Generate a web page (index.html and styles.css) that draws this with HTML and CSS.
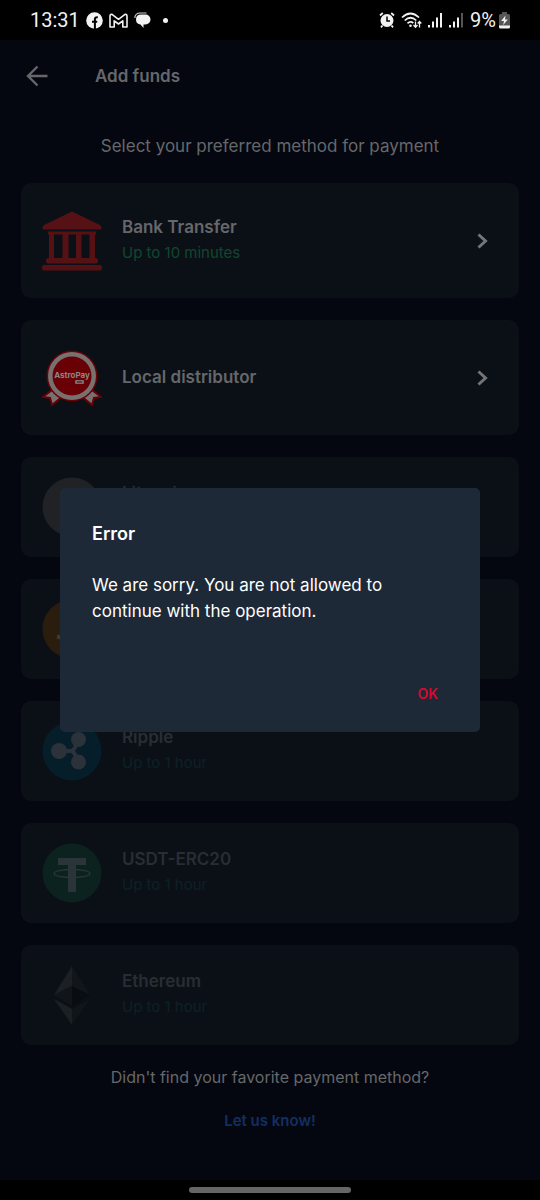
FILE: index.html
```html
<!DOCTYPE html>
<html lang="en">
<head>
    <meta charset="UTF-8">
    <meta name="viewport" content="width=device-width, initial-scale=1.0">
    <title>Add funds</title>
    <link rel="stylesheet" href="styles.css">
</head>
<body>
    <div class="screen">
        <!-- Phone status bar -->
        <div class="status-bar">
            <div class="status-left">
                <span class="clock">13:31</span>
                <svg width="17" height="17" viewBox="0 0 17 17">
                    <circle cx="8.500" cy="8.500" r="8.300" fill="#f2f2f2"/>
                    <path d="M8.900 17v-6.300M6 9.700h5.200M8.900 12V7.300Q8.900 4.900 11.800 5.200" fill="none" stroke="#000" stroke-width="2"/>
                </svg>
                <svg width="19" height="15" viewBox="0 0 19 15">
                    <path d="M1 3.200Q1 1 3 1.400L9.500 6.300 16 1.400Q18 1 18 3.200V14H13.800V7.800L9.500 11 5.200 7.800V14H1Z" fill="none" stroke="#f2f2f2" stroke-width="1.600" stroke-linejoin="round"/>
                </svg>
                <svg width="17" height="17" viewBox="0 0 17 17">
                    <path d="M.8 6Q1 1 6.500 1h6" fill="none" stroke="#cfcfcf" stroke-width="1.200"/>
                    <path d="M7 2.500h4.500A5 5 0 0 1 11.500 12.500H9.500V16L6.500 12.500Q2 12 2 7.500 2 2.500 7 2.500Z" fill="#f2f2f2"/>
                </svg>
                <span class="dot"></span>
            </div>
            <div class="status-right">
                <svg width="16" height="16" viewBox="0 0 16 16">
                    <circle cx="8" cy="8.500" r="6.500" fill="#f2f2f2"/>
                    <path d="M1 3.500 3.800 1M15 3.500 12.200 1M3.500 13.500 2 15.300M12.500 13.500 14 15.300" stroke="#f2f2f2" stroke-width="1.800"/>
                    <path d="M8 4.500V9h3" fill="none" stroke="#000" stroke-width="1.500"/>
                </svg>
                <svg width="21" height="17" viewBox="0 0 21 17">
                    <g fill="none" stroke="#f2f2f2" stroke-width="1.700">
                        <path d="M1 5.500Q9.500-2.500 18 5.500M3.700 8.500Q9.500 3 15.300 8.500M6.500 11.300Q9.500 8.500 12.300 11"/>
                        <path d="M14.500 9.500v5.500M12.500 13l2 2.200 2-2.200M18.500 15.500V9.500M16.700 11.500l1.800-2 1.800 2" stroke-width="1.300"/>
                    </g>
                    <circle cx="9.500" cy="13.800" r="1.300" fill="#f2f2f2"/>
                </svg>
                <svg width="15" height="16" viewBox="0 0 15 16" fill="#f2f2f2">
                    <path d="M0 13h2v2.500H0zM4 9.500h2v6H4zM8 5.500h2v10H8zM12 1h2v14.500h-2z"/>
                </svg>
                <svg width="15" height="16" viewBox="0 0 15 16" fill="#f2f2f2">
                    <path d="M0 13h2v2.500H0zM4 9.500h2v6H4zM8 5.500h2v10H8z"/>
                    <path d="M12 1h2v14.500h-2z" fill="#555"/>
                </svg>
                <span class="battery">
                    9%
                    <svg width="11" height="17" viewBox="0 0 11 17">
                        <path d="M3 0h5v2h1.500Q11 2 11 3.500V14H0V3.500Q0 2 1.500 2H3z" fill="#555"/>
                        <path d="M0 13.500h11V15q0 1.500-1.500 1.500h-8Q0 16.500 0 15z" fill="#f2f2f2"/>
                        <path d="M6.500 3.500 2.200 9H5l-.8 4L8.800 7.500H6z" fill="#f2f2f2"/>
                    </svg>
                </span>
            </div>
        </div>

        <header class="app-bar">
            <button class="back" type="button" aria-label="Back">
                <svg width="22" height="22" viewBox="0 0 22 22" fill="none" stroke="#66676a" stroke-width="2.400">
                    <path d="M21.500 11H2.500M11.500 1.500 2 11l9.500 9.500"/>
                </svg>
            </button>
            <h1 class="title">Add funds</h1>
        </header>

        <main class="content">
            <p class="intro">Select your preferred method for payment</p>

            <div class="methods">
                <button class="card card-tall" type="button">
                    <svg class="logo" viewBox="0 0 60 60" fill="#561114">
                        <path d="M30 .5 57 13.500q3 1.500 2.500 4-.5 1-2.500 1H3q-2 0-2.500-1Q0 15 3 13.500Z"/>
                        <path d="M6 20.500h48v3H6z"/>
                        <path d="M7 22h5v27H7zM20.500 22h6v27h-6zM34 22h5.500v27H34zM47.500 22h5.500v27h-5.500z"/>
                        <rect x="4" y="47" width="52" height="5.500" rx="2.500"/>
                        <rect x="0" y="54" width="60" height="5.500" rx="2.500"/>
                    </svg>
                    <span class="info">
                        <span class="name">Bank Transfer</span>
                        <span class="time">Up to 10 minutes</span>
                    </span>
                    <svg class="chevron" width="11" height="16" viewBox="0 0 11 16"><path d="M1.500 1.500 8.500 8l-7 6.500"/></svg>
                </button>

                <button class="card card-tall" type="button">
                    <svg class="logo" viewBox="0 0 60 60">
                        <path d="M10 42 1 49l7 1 2 7 11-9zM50 42l9 7-7 1-2 7-11-9z" fill="#777170" stroke="#680006" stroke-width="2"/>
                        <circle cx="30" cy="28" r="25.500" fill="#680006"/>
                        <circle cx="30" cy="28" r="24" fill="#777170"/>
                        <circle cx="30" cy="28" r="19.500" fill="#680006"/>
                        <text x="30" y="30" class="astro" text-anchor="middle">AstroPay</text>
                        <rect x="33" y="32" width="9" height="4" rx="1" fill="#777170"/>
                        <path d="M35 34h5" stroke="#680006"/>
                    </svg>
                    <span class="info">
                        <span class="name">Local distributor</span>
                    </span>
                    <svg class="chevron" width="11" height="16" viewBox="0 0 11 16"><path d="M1.500 1.500 8.500 8l-7 6.500"/></svg>
                </button>

                <button class="card disabled" type="button" disabled>
                    <svg class="logo" viewBox="0 0 60 60">
                        <circle cx="30" cy="30" r="29.500" fill="#202225"/>
                        <path d="M32 12 26 39h16M20 32l18-7" fill="none" stroke="#34363a" stroke-width="5"/>
                    </svg>
                    <span class="info">
                        <span class="name">Litecoin</span>
                        <span class="time">Up to 1 hour</span>
                    </span>
                </button>

                <button class="card disabled" type="button" disabled>
                    <svg class="logo" viewBox="0 0 60 60">
                        <circle cx="30" cy="30" r="29.500" fill="#2b1d0e"/>
                        <path d="M15 37.500l7 1.700 5-21-5-1.300M27 18q14 1 11 7-2 4-12 2 14 3 11 9-3 5-14 2" fill="none" stroke="#413a34" stroke-width="4"/>
                    </svg>
                    <span class="info">
                        <span class="name">Bitcoin</span>
                        <span class="time">Up to 1 hour</span>
                    </span>
                </button>

                <button class="card disabled" type="button" disabled>
                    <svg class="logo" viewBox="0 0 60 60">
                        <circle cx="30" cy="30" r="29.500" fill="#061d2a"/>
                        <g fill="#2b323a">
                            <circle cx="17" cy="30" r="8"/>
                            <circle cx="36.500" cy="18.500" r="7.500"/>
                            <circle cx="36.500" cy="41" r="7.500"/>
                        </g>
                        <path d="M22 30h7q4-1 5-7M29 30q4 1 5 7" fill="none" stroke="#2b323a" stroke-width="4"/>
                    </svg>
                    <span class="info">
                        <span class="name">Ripple</span>
                        <span class="time">Up to 1 hour</span>
                    </span>
                </button>

                <button class="card disabled" type="button" disabled>
                    <svg class="logo" viewBox="0 0 60 60">
                        <circle cx="30" cy="30" r="29.500" fill="#0b221e"/>
                        <path d="M16 15h28v7H34v27h-8V22H16z" fill="#2a3539"/>
                        <ellipse cx="30" cy="30.500" rx="18" ry="4" fill="none" stroke="#2a3539" stroke-width="1.300"/>
                    </svg>
                    <span class="info">
                        <span class="name">USDT-ERC20</span>
                        <span class="time">Up to 1 hour</span>
                    </span>
                </button>

                <button class="card disabled" type="button" disabled>
                    <svg class="logo" viewBox="0 0 60 60">
                        <path d="M30 1v20L12 30z" fill="#1c2025"/>
                        <path d="M30 1v20l18 9z" fill="#11161b"/>
                        <path d="M30 21v20L12 30z" fill="#11151a"/>
                        <path d="M30 21v20l18-11z" fill="#090c10"/>
                        <path d="M12 34l18 10v16z" fill="#1c2025"/>
                        <path d="M48 34 30 44v16z" fill="#10151a"/>
                    </svg>
                    <span class="info">
                        <span class="name">Ethereum</span>
                        <span class="time">Up to 1 hour</span>
                    </span>
                </button>
            </div>

            <p class="question">Didn't find your favorite payment method?</p>
            <a class="contact" href="#">Let us know!</a>
        </main>

        <div class="nav-bar"><span class="handle"></span></div>
    </div>

    <!-- Error dialog -->
    <div class="overlay">
        <div class="dialog" role="alertdialog" aria-labelledby="dialog-title" aria-describedby="dialog-text">
            <h2 class="dialog-title" id="dialog-title">Error</h2>
            <p class="dialog-text" id="dialog-text">We are sorry. You are not allowed to continue with the operation.</p>
            <button class="ok" type="button">OK</button>
        </div>
    </div>
</body>
</html>
```
FILE: styles.css
```css
* {
    box-sizing: border-box;
}

body {
    margin: 0;
    background: #04070f;
    color: #66676a;
    font-family: Inter, "Open Sans", sans-serif;
    font-size: 16px;
}

h1, h2, p {
    margin: 0;
}

button {
    border: 0;
    padding: 0;
    background: none;
    color: inherit;
    font: inherit;
    text-align: left;
}

.screen {
    display: flex;
    flex-direction: column;
    min-height: 100vh;
}

/* Status bar */
.status-bar {
    display: flex;
    justify-content: space-between;
    align-items: center;
    height: 40px;
    padding: 0 30px;
    background: #000;
    color: #f2f2f2;
    font-family: Roboto, sans-serif;
    font-size: 20px;
}

.status-left {
    display: flex;
    align-items: center;
    gap: 6px;
}

.status-right {
    display: flex;
    align-items: center;
    gap: 6px;
}

.battery {
    display: flex;
    align-items: center;
    gap: 3px;
}

.dot {
    width: 5px;
    height: 5px;
    margin-left: 6px;
    border-radius: 50%;
    background: #f2f2f2;
}

/* App bar */
.app-bar {
    display: flex;
    align-items: center;
    gap: 47px;
    height: 72px;
    padding: 0 26px;
}

.back {
    display: flex;
}

.title {
    font-size: 17px;
    font-weight: 600;
}

/* Payment methods */
.content {
    display: flex;
    flex-direction: column;
    align-items: center;
    padding: 20px 21px;
}

.intro {
    font-size: 17px;
    line-height: 28px;
}

.methods {
    display: flex;
    flex-direction: column;
    gap: 22px;
    width: 100%;
    margin: 23px 0 20px;
}

.card {
    display: flex;
    align-items: center;
    gap: 20px;
    height: 100px;
    padding: 0 31px 0 21px;
    border-radius: 10px;
    background: #0b1017;
}

.card-tall {
    height: 115px;
}

.logo {
    flex: none;
    width: 60px;
    height: 60px;
}

.astro {
    fill: #8f8583;
    font-size: 8px;
    font-weight: 700;
}

.info {
    display: flex;
    flex: 1;
    flex-direction: column;
    padding-bottom: 2px;
    line-height: 26px;
}

.name {
    font-size: 17px;
    font-weight: 600;
}

.time {
    color: #11472f;
    font-size: 15px;
}

.disabled .name {
    color: #292d33;
}

.disabled .time {
    color: #0d2124;
}

.chevron {
    fill: none;
    stroke: #747577;
    stroke-width: 3;
}

.question {
    font-size: 16px;
    line-height: 24px;
}

.contact {
    margin-top: 20px;
    color: #122f63;
    font-size: 15px;
    font-weight: 600;
    line-height: 24px;
    text-decoration: none;
}

/* Gesture bar */
.nav-bar {
    display: flex;
    justify-content: center;
    align-items: center;
    height: 20px;
    margin-top: auto;
    background: #000;
}

.handle {
    width: 30%;
    height: 6px;
    border-radius: 3px;
    background: #666;
}

/* Dialog */
.overlay {
    position: fixed;
    inset: 40px 0 20px;
    display: flex;
    justify-content: center;
    align-items: center;
    padding: 0 60px;
}

.dialog {
    display: flex;
    flex-direction: column;
    width: 100%;
    max-width: 480px;
    padding: 32px 32px 28px;
    border-radius: 5px;
    background: #1e2938;
    color: #fff;
}

.dialog-title {
    font-size: 18px;
    font-weight: 600;
    line-height: 28px;
}

.dialog-text {
    margin: 24px 0 60px;
    font-size: 17px;
    line-height: 26px;
}

.ok {
    align-self: flex-end;
    padding: 0 10px;
    color: #d6092f;
    font-size: 14px;
    font-weight: 600;
    line-height: 20px;
}
```
